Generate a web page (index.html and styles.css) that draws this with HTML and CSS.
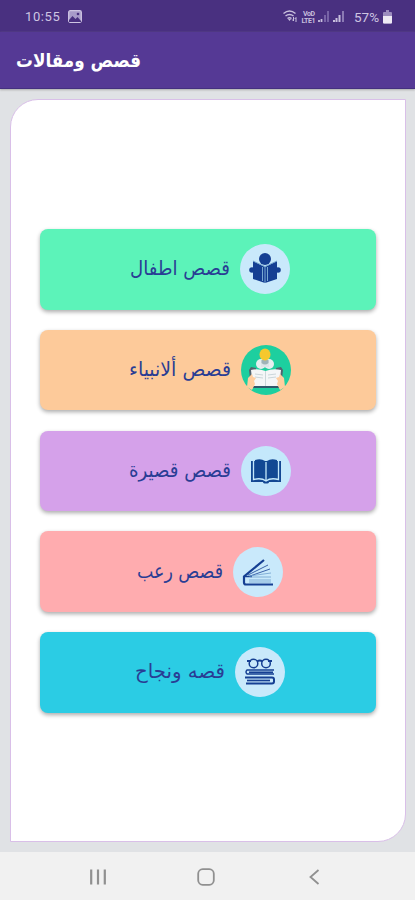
FILE: index.html
```html
<!DOCTYPE html>
<html lang="ar">
<head>
<meta charset="utf-8">
<title>قصص ومقالات</title>
<link rel="stylesheet" href="styles.css">
</head>
<body>
<header class="status">
  <span class="clock">10:55</span>
  <svg class="photo" viewBox="0 0 14 13"><rect x=".7" y=".7" width="12.6" height="11.6" rx="1.5" fill="#a89bc9" stroke="#cec5e2" stroke-width="1.3"/><path d="M1 10l3.500-4 3 3 2-2 3.500 4v1H1z" fill="#493080"/><circle cx="10" cy="4" r="1.300" fill="#493080"/></svg>
  <svg class="signals" viewBox="0 0 66 16" fill="none" stroke="#c8bfdd">
    <path d="M1.500 4.500q6-5 12 0M3.500 7q4-3 8 0M5.500 9.500q2-1.600 4 0" stroke-width="1.500"/><path d="M7.500 12l-1.500-2h3z" fill="#c8bfdd" stroke="none"/><path d="M11.500 8v4m-1.300-1.500l1.300 1.500M14 13V8.500m-1.300 1.500L14 8.500" stroke-width="1"/>
    <g fill="#c8bfdd" stroke="none" class="volte"><text x="21" y="7" textLength="12">VoD</text><text x="19.500" y="14" textLength="14">LTE1</text></g>
    <path d="M37 13v-2M39.500 13v-3" stroke-width="1.800"/><path d="M43 13V6M46 13V2" stroke="#7763a6" stroke-width="2"/>
    <path d="M52 13v-2M54.500 13V9M57.500 13V6" stroke-width="2"/><path d="M61 13V2" stroke="#8b7ab4" stroke-width="2"/>
  </svg>
  <span class="percent">57%</span>
  <svg class="battery" viewBox="0 0 9 14"><path d="M3 0h3v2h2q1 0 1 1v9.500q0 1-1 1H1q-1 0-1-1V3q0-1 1-1h2z" fill="#9c8cbe"/><path d="M0 6h9v6.500q0 1-1 1H1q-1 0-1-1z" fill="#eee9f4"/></svg>
</header>
<div class="appbar"><svg class="title" height="38" width="126"><text x="0" y="25" textLength="125" lengthAdjust="spacingAndGlyphs">قصص ومقالات</text></svg></div>
<main class="page">
  <section class="panel">
    <a class="card green">
      <svg class="label" width="101" height="40"><text x="0" y="26" textLength="100" lengthAdjust="spacingAndGlyphs">قصص اطفال</text></svg>
      <svg class="icon" viewBox="0 0 50 50"><circle cx="25" cy="25" r="25" fill="#c9e9fb"/><g fill="#153f93"><circle cx="25" cy="15" r="6"/><path d="M13 17l12 6 12-6v18l-12 4-12-4z"/><circle cx="12" cy="26" r="2.800"/><circle cx="38" cy="26" r="2.800"/></g><path d="M13 17l12 5.500L37 17M25 23v16M22.500 23v14M27.500 23v14" fill="none" stroke="#79a9d1" stroke-width="1"/></svg>
    </a>
    <a class="card orange">
      <svg class="label" width="103" height="40"><text x="0" y="26" textLength="102" lengthAdjust="spacingAndGlyphs">قصص ألانبياء</text></svg>
      <svg class="icon" viewBox="0 0 50 50"><circle cx="25" cy="25" r="25" fill="#1dcf9f"/><path d="M8 25l2-3 5 1v11H9zM42 25l-2-3-5 1v11h6z" fill="#51646f"/><circle cx="20" cy="19" r="5" fill="#e5eef0"/><circle cx="28" cy="19" r="5" fill="#e5eef0"/><path d="M20 16q4-5 8 0v6h-8z" fill="#dde5e9"/><path d="M20.500 15h7v3q-3.500 3-7 0z" fill="#9eb3b8"/><ellipse cx="24" cy="9.500" rx="5.500" ry="6" fill="#f5c82d"/><path d="M10 25q7-2 14.500 1 7.500-3 15.500-1l-2 17H12z" fill="#f4f6f7"/><path d="M24.500 26v16M14 29l8 1M14 32l8 1M27 30l8-1M27 33l8-1" fill="none" stroke="#cbd6da"/><path d="M12 41h26v2H12z" fill="#31576a"/><path d="M6 42l1-9 4-4 1 3 3 1-2 3 1 3-3 6zM44 42l-1-9-4-4-1 3-3 1 2 3-1 3 3 6z" fill="#ffce9f"/></svg>
    </a>
    <a class="card purple">
      <svg class="label" width="103" height="40"><text x="0" y="26" textLength="102" lengthAdjust="spacingAndGlyphs">قصص قصيرة</text></svg>
      <svg class="icon" viewBox="0 0 50 50"><circle cx="25" cy="25" r="25" fill="#c4e8fb"/><path d="M10 15h30v21H28q0 1.500-3 1.500T22 36H10z" fill="#124893"/><path d="M12.500 15v18.500q8-2 12.500 1.500 4.500-3.500 12.500-1.500V15M25 16v19" fill="none" stroke="#c4e8fb" stroke-width="1.300"/><path d="M14 14q6-2 10 1v17q-4-2-10-.5zM36 14q-6-2-10 1v17q4-2 10-.5z" fill="#124893"/></svg>
    </a>
    <a class="card pink">
      <svg class="label" width="87" height="40"><text x="0" y="26" textLength="86" lengthAdjust="spacingAndGlyphs">قصص رعب</text></svg>
      <svg class="icon" viewBox="0 0 50 50"><circle cx="25" cy="25" r="25" fill="#c9e9fb"/><g fill="none" stroke="#153f93"><path d="M31 13L11 29.500v6q0 2 2 2h27" stroke-width="2.200"/><path d="M11 29.500h8" stroke-width="1.500"/><path d="M15 28l20-10M17 29l20-7" stroke-width=".8"/><path d="M16 29l22-3M17 30h21M16 33h22M16 35h22" stroke="#6fa0ce" stroke-width=".8"/></g></svg>
    </a>
    <a class="card cyan">
      <svg class="label" width="91" height="40"><text x="0" y="26" textLength="90" lengthAdjust="spacingAndGlyphs">قصه ونجاح</text></svg>
      <svg class="icon" viewBox="0 0 50 50"><circle cx="25" cy="25" r="25" fill="#c9e9fb"/><g fill="none" stroke="#153f93"><circle cx="18.500" cy="16.500" r="4.300" stroke-width="1.500"/><circle cx="31" cy="16.500" r="4.300" stroke-width="1.500"/><path d="M12 14h4M33 14h4M22 14.500q2.700-2 5.500 0" stroke-width="1.900"/><path d="M39 23H12q-2 2 0 4h27" stroke-width="1.400"/><path d="M14 25.300h24" stroke-width="1.700"/><path d="M10 30.500h27q2 0 2 2v2q0 2-2 2H11" stroke-width="2"/><path d="M12 33.500h23" stroke-width="1.700"/></g></svg>
    </a>
  </section>
</main>
<nav class="nav">
  <svg viewBox="0 0 18 18"><path d="M2.200 1.500v15M9 1.500v15M15.800 1.500v15" stroke-width="2.200"/></svg>
  <svg viewBox="0 0 18 18"><rect x="1.200" y="1.200" width="15.600" height="15.600" rx="4.500" stroke-width="1.800"/></svg>
  <svg viewBox="0 0 18 18"><path d="M13.500 2L5.500 9l8 7" stroke-width="1.800"/></svg>
</nav>
</body>
</html>
```
FILE: styles.css
```css
* { box-sizing: border-box; }
body { margin: 0; width: 415px; height: 900px; display: flex; flex-direction: column; background: #e0e2e5; font-family: "DejaVu Sans", "Noto Sans", sans-serif; overflow: hidden; }
.status { height: 32px; background: #493080; display: flex; align-items: center; color: #cec5e2; padding: 1px 23px 0 25px; font: 13px Roboto, sans-serif; flex: none; }
.clock { width: 37px; letter-spacing: .6px; }
.photo { width: 14px; height: 13px; margin-left: 6px; }
.signals { width: 66px; height: 16px; margin-left: auto; }
.volte { font: bold 7px Roboto, sans-serif; }
.percent { width: 26px; margin-left: 6px; font-size: 13.500px; }
.battery { width: 9px; height: 14px; margin-left: 3px; }
.appbar { height: 57px; flex: none; background: #553995; border-bottom: 1px solid #44307f; padding: 10px 16px; box-shadow: 0 1px 2px #aaa; }
.title { display: block; overflow: visible; fill: #fff; font-size: 19px; font-weight: bold; }
.page { flex: 1; padding: 10px 9px 10px 10px; }
.panel { height: 743px; background: #fff; border: 1.500px solid #d9bfe8; border-radius: 28px 0 28px 0; padding: 129px 29px 0; display: flex; flex-direction: column; gap: 20.200px; }
.card { height: 80.600px; flex: none; border-radius: 8px; display: flex; align-items: center; justify-content: center; gap: 9px; padding-left: 4px; box-shadow: 0 2px 4px #0005; }
.green { background: #5cf3b9; }
.orange { background: #fdca9a; }
.purple { background: #d5a1ea; }
.pink { background: #ffacaf; }
.cyan { background: #2bcce4; }
.label { overflow: visible; fill: #293d94; font-size: 20px; }
.icon { width: 50px; height: 50px; }
.nav { height: 48px; flex: none; background: #f1f1f1; display: flex; justify-content: space-between; padding: 16px 92px 0 89px; }
.nav svg { width: 18px; height: 18px; fill: none; stroke: #909090; }
```
